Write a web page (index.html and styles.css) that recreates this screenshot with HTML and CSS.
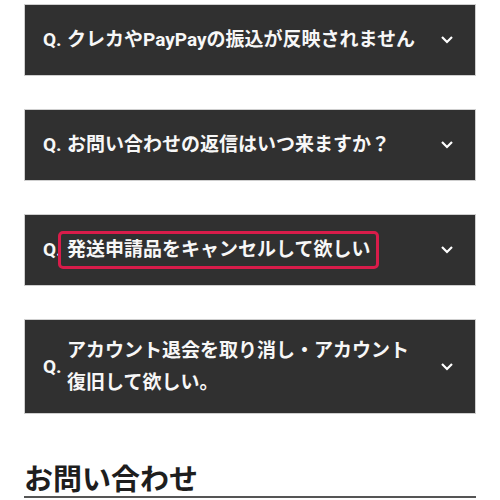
FILE: index.html
```html
<!DOCTYPE html>
<html lang="ja">
<head>
<meta charset="utf-8">
<link rel="stylesheet" href="styles.css">
</head>
<body>
<div class="page">
  <div class="faq-list">
    <div class="faq">
      <span class="q">Q.</span>
      <span class="text">クレカやPayPayの振込が反映されません</span>
      <svg class="chev" width="12" height="8" viewBox="0 0 12 8"><polyline points="1,1 6,6 11,1" fill="none" stroke="#fff" stroke-width="2.2"/></svg>
    </div>
    <div class="faq">
      <span class="q">Q.</span>
      <span class="text">お問い合わせの返信はいつ来ますか？</span>
      <svg class="chev" width="12" height="8" viewBox="0 0 12 8"><polyline points="1,1 6,6 11,1" fill="none" stroke="#fff" stroke-width="2.2"/></svg>
    </div>
    <div class="faq">
      <span class="q">Q.</span>
      <span class="text"><span class="hl">発送申請品をキャンセルして欲しい</span></span>
      <svg class="chev" width="12" height="8" viewBox="0 0 12 8"><polyline points="1,1 6,6 11,1" fill="none" stroke="#fff" stroke-width="2.2"/></svg>
    </div>
    <div class="faq">
      <span class="q">Q.</span>
      <span class="text">アカウント退会を取り消し・アカウント<br>復旧して欲しい。</span>
      <svg class="chev" width="12" height="8" viewBox="0 0 12 8"><polyline points="1,1 6,6 11,1" fill="none" stroke="#fff" stroke-width="2.2"/></svg>
    </div>
  </div>
  <h2 class="heading">お問い合わせ</h2>
</div>
</body>
</html>
```
FILE: styles.css
```css
html, body {
  margin: 0;
  padding: 0;
  background: #fff;
}
body {
  font-family: Roboto, "Noto Sans CJK JP", sans-serif;
}
.page {
  padding: 4px 24px 0;
}
.faq-list {
  display: flex;
  flex-direction: column;
  gap: 33px;
}
.faq {
  display: flex;
  align-items: center;
  min-height: 72px;
  box-sizing: border-box;
  background: #303030;
  border: 1px solid #cfcfcf;
  padding: 14.5px 22px 14.5px 18px;
  color: #f7f7f7;
  font-size: 19px;
  font-weight: 700;
  line-height: 32px;
}
.q {
  flex: 0 0 24px;
  width: 24px;
}
.text {
  flex: 1;
}
.hl {
  position: relative;
}
.hl::after {
  content: "";
  position: absolute;
  top: -7px;
  bottom: -8px;
  left: -9px;
  right: -9px;
  border: 3.5px solid #d81c4a;
  border-radius: 5px;
}
.chev {
  flex: 0 0 auto;
  display: block;
}
.heading {
  margin: 44px 0 0;
  font-family: "Noto Sans CJK JP", sans-serif;
  font-size: 29px;
  font-weight: 700;
  line-height: 38px;
  color: #1e1e1e;
  border-bottom: 2px solid #555;
}
```
